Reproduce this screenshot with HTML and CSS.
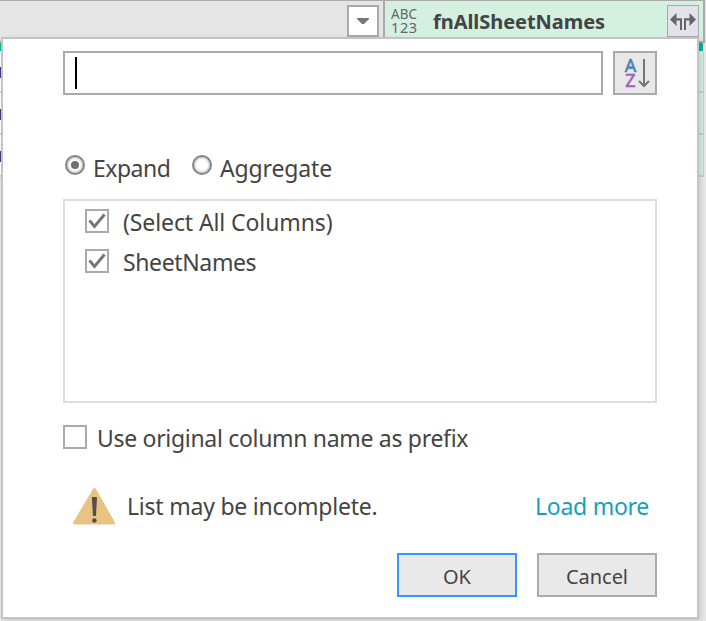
FILE: index.html
```html
<!DOCTYPE html>
<html lang="en">
<head>
<meta charset="utf-8">
<title>fnAllSheetNames</title>
<link rel="stylesheet" href="styles.css">
</head>
<body>
<div class="table">
  <div class="header">
    <div class="head-cell head-plain">
      <div class="filter"><svg width="28" height="28" viewBox="0 0 28 28"><path d="M8 11h12v1l-5 5h-2l-5-5z" fill="#777"/></svg></div>
    </div>
    <div class="head-cell head-active">
      <div class="type"><span class="abc">ABC</span><span class="num">123</span></div>
      <span class="name">fnAllSheetNames</span>
      <div class="expand"><svg width="30" height="30" viewBox="0 0 30 30">
        <path d="M2 13.500 8.500 7v5.200h5.500V24h-2v-9.500h-3.500V20zM28 13.500 21.500 7v5.200h-5.500V24h2v-9.500h3.500V20z" fill="#666"/></svg></div>
    </div>
  </div>
  <div class="quality"></div>
  <div class="row"><i class="value"></i><div class="cell"></div></div>
  <div class="row"><i class="value"></i><div class="cell"></div></div>
  <div class="row"><i class="value"></i><div class="cell"></div></div>
</div>
<div class="dialog">
  <div class="search-row">
    <div class="search"><span class="caret"></span></div>
    <div class="sort"><svg width="40" height="40" viewBox="0 0 40 40">
      <text x="9.700" y="19" class="sort-a">A</text><text x="10.200" y="34" class="sort-z">Z</text>
      <path d="M29 6v27M24 28l5 5 5-5" fill="none" stroke="#777" stroke-width="2"/></svg></div>
  </div>
  <div class="modes">
    <span class="radio checked"></span><span class="text expand-text">Expand</span>
    <span class="radio second"></span><span class="text aggregate-text">Aggregate</span>
  </div>
  <div class="columns">
    <div class="column"><span class="check"><svg width="20" height="20" viewBox="0 0 20 20"><path d="M2.500 9.500 7.500 15.500 17.500 3.500" fill="none" stroke="#777" stroke-width="3"/></svg></span><span class="text all-text">(Select All Columns)</span></div>
    <div class="column"><span class="check"><svg width="20" height="20" viewBox="0 0 20 20"><path d="M2.500 9.500 7.500 15.500 17.500 3.500" fill="none" stroke="#777" stroke-width="3"/></svg></span><span class="text sheet-text">SheetNames</span></div>
  </div>
  <div class="prefix"><span class="check"></span><span class="text prefix-text">Use original column name as prefix</span></div>
  <div class="notice">
    <svg width="44" height="38" viewBox="0 0 44 38"><path d="M22.500 2.500 41.500 36H2.500z" fill="#eac282" stroke="#eac282" stroke-width="3" stroke-linejoin="round"/><path d="M19.800 10h5.200l-1 19h-3z" fill="#505050"/><circle cx="22.400" cy="33.500" r="2.300" fill="#505050"/></svg>
    <span class="text notice-text">List may be incomplete.</span>
    <span class="text load">Load more</span>
  </div>
  <div class="buttons"><div class="button primary"><span>OK</span></div><div class="button"><span>Cancel</span></div></div>
</div>
</body>
</html>
```
FILE: styles.css
```css
* { box-sizing: border-box; }
body { margin: 0; width: 706px; height: 621px; overflow: hidden; background: #e6e6e6; color: #444; font-family: "Noto Sans", sans-serif; }
svg { display: block; flex: none; }
.header { display: flex; width: 705px; height: 43px; border-top: 1px solid #aaa; background: #e5e5e5; }
.head-cell { border-right: 2px solid #aaa; border-bottom: 2px solid #aaa; display: flex; }
.head-plain { width: 385px; justify-content: flex-end; padding: 4px 4px 0 0; }
.filter { width: 32px; height: 32px; border: 2px solid #aaa; background: #fff; }
.head-active { width: 320px; background: #d3f0e0; padding-top: 4px; }
.type { width: 48px; padding: 3px 0 0 6px; display: flex; flex-direction: column; color: #666; line-height: 13px; }
.abc { font-size: 13.5px; }
.num { font-size: 14.5px; letter-spacing: .6px; }
.name { width: 234px; font-weight: 700; font-size: 20px; line-height: 34px; letter-spacing: -.05px; white-space: nowrap; }
.expand { width: 32px; height: 32px; border: 1px solid #a7a9ae; background: #e0e3ea; }
.quality { width: 703px; height: 8px; background: #00b5a5; }
.row { width: 704px; height: 42px; background: #fff; border-bottom: 2px solid #ccc; border-right: 1px solid #ccc; display: flex; align-items: center; }
.value { width: 1px; height: 11px; margin-top: 3px; background: #3c3c83; }
.cell { margin-left: auto; width: 318px; height: 40px; background: #d3f0e0; }
.dialog { position: absolute; left: 1px; top: 37px; width: 698px; height: 582px; border: 2px solid #c4c4c4; background: #fff; padding: 12px 40px 0 60px; box-shadow: 2px 2px 5px rgba(0,0,0,.12); }
.text { font-size: 23px; line-height: 32px; white-space: nowrap; }
.search-row { display: flex; gap: 10px; }
.search { width: 540px; height: 44px; border: 2px solid #aaa; padding: 4px 10px; }
.caret { display: block; width: 2px; height: 32px; background: #000; }
.sort { width: 44px; height: 44px; border: 2px solid #aaa; background: #e8e8e8; }
.sort-a, .sort-z { font-size: 18px; font-family: "Noto Sans", sans-serif; stroke-width: .6px; }
.sort-a { fill: #4b82bd; stroke: #4b82bd; }
.sort-z { fill: #9b63b8; stroke: #9b63b8; }
.modes { display: flex; height: 32px; margin-top: 57px; padding-left: 2px; }
.radio { width: 20px; height: 20px; margin-top: 3px; border: 2px solid #858585; border-radius: 50%; background: #fff; box-shadow: inset 0 0 2px 1px #bbb; display: flex; align-items: center; justify-content: center; }
.checked::after { content: ""; width: 8px; height: 8px; border-radius: 50%; background: #707070; }
.modes .text { margin-left: 8px; }
.expand-text { width: 99px; letter-spacing: -.5px; }
.aggregate-text { letter-spacing: -.15px; }
.all-text { letter-spacing: -.1px; }
.sheet-text { letter-spacing: -.37px; }
.prefix-text { letter-spacing: -.31px; }
.columns { margin-top: 15px; width: 594px; height: 204px; border: 2px solid #dbdfe2; padding: 1px 20px; }
.column { display: flex; height: 40px; align-items: center; gap: 14px; }
.column .check { margin-top: -2px; }
.check { width: 24px; height: 24px; border: 2px solid #aaa; background: #fff; flex: none; }
.prefix { display: flex; align-items: center; gap: 10px; height: 32px; margin-top: 19px; }
.prefix .check { margin-top: -2px; }
.notice { display: flex; align-items: center; height: 40px; margin-top: 32px; padding-left: 9px; }
.notice-text { margin-left: 11px; letter-spacing: -.22px; }
.load { margin-left: auto; margin-right: 8px; color: #149fbe; letter-spacing: -.28px; }
.buttons { display: flex; gap: 20px; margin: 27px 0 0 334px; }
.button { width: 120px; height: 44px; border: 2px solid #aaa; background: #e9e9e9; display: flex; align-items: center; justify-content: center; font-size: 20px; line-height: 30px; padding-top: 4px; letter-spacing: -.05px; }
.primary { border-color: #3597fd; }
```
